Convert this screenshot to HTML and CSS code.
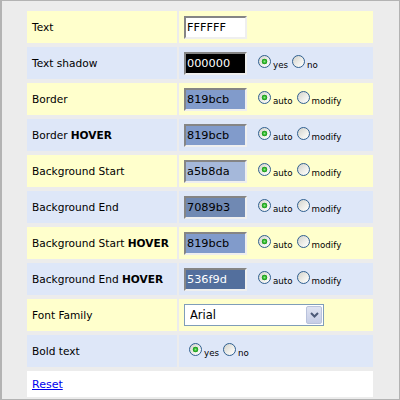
FILE: index.html
```html
<!DOCTYPE html>
<html>
<head>
<meta charset="utf-8">
<link rel="stylesheet" href="styles.css">
</head>
<body>
<div class="frame">
  <div class="table">
    <div class="row yellow">
      <div class="label">Text</div>
      <div class="value"><input class="color" type="text" value="FFFFFF" style="background:#ffffff;color:#000"></div>
    </div>
    <div class="row blue">
      <div class="label">Text shadow</div>
      <div class="value"><input class="color" type="text" value="000000" style="background:#000000;color:#fff">
        <div class="opts"><label class="opt"><input type="radio" name="ts" checked><span>yes</span></label><label class="opt"><input type="radio" name="ts"><span>no</span></label></div>
      </div>
    </div>
    <div class="row yellow">
      <div class="label">Border</div>
      <div class="value"><input class="color" type="text" value="819bcb" style="background:#819bcb;color:#000">
        <div class="opts"><label class="opt"><input type="radio" name="b" checked><span>auto</span></label><label class="opt"><input type="radio" name="b"><span>modify</span></label></div>
      </div>
    </div>
    <div class="row blue">
      <div class="label">Border <b>HOVER</b></div>
      <div class="value"><input class="color" type="text" value="819bcb" style="background:#819bcb;color:#000">
        <div class="opts"><label class="opt"><input type="radio" name="bh" checked><span>auto</span></label><label class="opt"><input type="radio" name="bh"><span>modify</span></label></div>
      </div>
    </div>
    <div class="row yellow">
      <div class="label">Background Start</div>
      <div class="value"><input class="color" type="text" value="a5b8da" style="background:#a5b8da;color:#000">
        <div class="opts"><label class="opt"><input type="radio" name="bs" checked><span>auto</span></label><label class="opt"><input type="radio" name="bs"><span>modify</span></label></div>
      </div>
    </div>
    <div class="row blue">
      <div class="label">Background End</div>
      <div class="value"><input class="color" type="text" value="7089b3" style="background:#7089b3;color:#000">
        <div class="opts"><label class="opt"><input type="radio" name="be" checked><span>auto</span></label><label class="opt"><input type="radio" name="be"><span>modify</span></label></div>
      </div>
    </div>
    <div class="row yellow">
      <div class="label">Background Start <b>HOVER</b></div>
      <div class="value"><input class="color" type="text" value="819bcb" style="background:#819bcb;color:#000">
        <div class="opts"><label class="opt"><input type="radio" name="bsh" checked><span>auto</span></label><label class="opt"><input type="radio" name="bsh"><span>modify</span></label></div>
      </div>
    </div>
    <div class="row blue">
      <div class="label">Background End <b>HOVER</b></div>
      <div class="value"><input class="color" type="text" value="536f9d" style="background:#536f9d;color:#fff">
        <div class="opts"><label class="opt"><input type="radio" name="beh" checked><span>auto</span></label><label class="opt"><input type="radio" name="beh"><span>modify</span></label></div>
      </div>
    </div>
    <div class="row yellow">
      <div class="label">Font Family</div>
      <div class="value">
        <div class="select-wrap">
          <select class="select"><option>Arial</option></select>
          <span class="select-btn"><svg width="9" height="6" viewBox="0 0 9 6"><path d="M1 1 L4.5 4.5 L8 1" fill="none" stroke="#4d5a78" stroke-width="2"/></svg></span>
        </div>
      </div>
    </div>
    <div class="row blue">
      <div class="label">Bold text</div>
      <div class="value">
        <div class="opts first"><label class="opt"><input type="radio" name="bt" checked><span>yes</span></label><label class="opt"><input type="radio" name="bt"><span>no</span></label></div>
      </div>
    </div>
    <div class="reset-row"><a href="#">Reset</a></div>
  </div>
</div>
</body>
</html>
```

FILE: styles.css
```css
html, body {
  margin: 0;
  padding: 0;
}
body {
  font-family: "DejaVu Sans", Verdana, sans-serif;
  color: #000;
}
.frame {
  width: 400px;
  height: 400px;
  box-sizing: border-box;
  border: 1px solid #b3b3b3;
  border-left-width: 2px;
  background: #ececec;
  padding: 10px 0 0 25px;
  overflow: hidden;
}
.table {
  width: 346px;
  display: flex;
  flex-direction: column;
  gap: 4px;
}
.row {
  display: grid;
  grid-template-columns: 150px 194px;
  column-gap: 2px;
  height: 32px;
}
.yellow .label, .yellow .value { background: #ffffcc; }
.blue .label, .blue .value { background: #dee7f8; }
.label {
  display: flex;
  align-items: center;
  padding-left: 5px;
  font-size: 10.6px;
  white-space: nowrap;
}
.label b { margin-left: 0.3em; }
.value {
  display: flex;
  align-items: center;
  padding-left: 5px;
}
.color {
  width: 63px;
  height: 23px;
  box-sizing: border-box;
  margin: 0;
  padding: 0 0 0 1px;
  border-style: solid;
  border-width: 2px;
  border-color: #858585 #efefef #efefef #858585;
  font-family: "DejaVu Sans", Verdana, sans-serif;
  font-size: 11.3px;
  outline: none;
}
.opts {
  display: flex;
  margin-left: 11px;
  gap: 4px;
}
.opts.first { margin-left: 5px; }
.opt {
  display: flex;
  align-items: flex-start;
  gap: 2px;
}
.opt span {
  margin-top: 5px;
  line-height: 11px;
  font-size: 8.7px;
}
.opt input {
  appearance: none;
  -webkit-appearance: none;
  width: 13px;
  height: 13px;
  margin: 0;
  box-sizing: border-box;
  border-radius: 50%;
  border: 1px solid #2f5f8f;
  background: linear-gradient(135deg, #d2d2cb 0%, #f0f0ec 60%, #ffffff 100%);
}
.opt input:checked {
  background:
    radial-gradient(circle at 50% 50%, #8fe88b 0, #2fb52b 1.6px, #1f9a1f 2.6px, rgba(0,0,0,0) 3.1px),
    linear-gradient(135deg, #d2d2cb 0%, #f0f0ec 60%, #ffffff 100%);
}
.select-wrap {
  position: relative;
  width: 140px;
  height: 22px;
}
.select {
  appearance: none;
  -webkit-appearance: none;
  width: 140px;
  height: 22px;
  margin: 0;
  box-sizing: border-box;
  border: 1px solid #7f9db9;
  border-radius: 0;
  background: #fff;
  padding: 0 0 0 5px;
  font-family: "DejaVu Sans", Verdana, sans-serif;
  font-size: 11.5px;
  color: #000;
}
.select-btn {
  position: absolute;
  right: 2px;
  top: 2px;
  width: 16px;
  height: 18px;
  box-sizing: border-box;
  border: 1px solid #b9c2dc;
  border-radius: 2px;
  background: linear-gradient(180deg, #dfe3f2, #c6cde6);
  display: flex;
  align-items: center;
  justify-content: center;
  pointer-events: none;
}
.reset-row {
  height: 26px;
  background: #fff;
  display: flex;
  align-items: center;
  padding-left: 5px;
  font-size: 11px;
}
.reset-row a {
  color: #0000ee;
  text-decoration: underline;
}
```
